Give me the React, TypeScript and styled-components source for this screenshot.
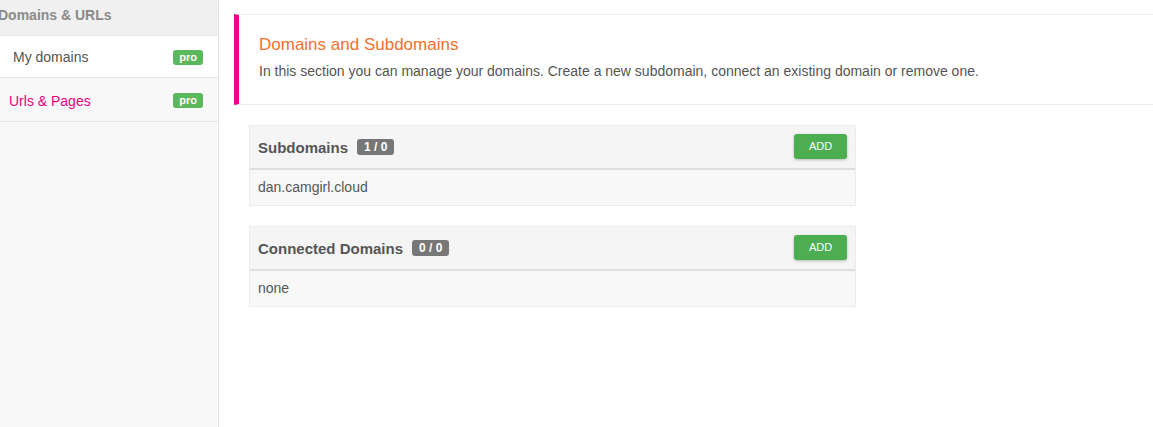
import React from "react";
import styled, { createGlobalStyle } from "styled-components";

const Global = createGlobalStyle`
  html, body { margin: 0; padding: 0; background: #fff; }
  body { font-family: "Liberation Sans", Arial, sans-serif; color: #555; }
  * { box-sizing: border-box; }
`;

const Layout = styled.div`
  display: flex;
  width: 1153px;
  height: 427px;
  overflow: hidden;
`;

const Sidebar = styled.aside`
  width: 219px;
  flex-shrink: 0;
  background: #f8f8f8;
  border-right: 1px solid #e3e3e3;
`;

const SideHeader = styled.div`
  height: 36px;
  background: #f0f0f0;
  border-bottom: 1px solid #e6e6e6;
  display: flex;
  align-items: center;
  font-weight: bold;
  font-size: 14px;
  color: #8a8a8a;
  text-indent: -2px;
  padding-bottom: 6px;
`;

const SideItem = styled.div<{ $active?: boolean; $indent: number }>`
  height: ${(p) => (p.$active ? 42 : 44)}px;
  display: flex;
  align-items: center;
  justify-content: space-between;
  padding-left: ${(p) => p.$indent}px;
  padding-right: 15px;
  padding-top: ${(p) => (p.$active ? 1 : 2)}px;
  background: ${(p) => (p.$active ? "#fff" : "#f8f8f8")};
  border-bottom: 1px solid #e6e6e6;
  font-size: 14px;
  color: ${(p) => (p.$active ? "#555" : "#e6007e")};
`;

const Pro = styled.span`
  background: #5cb85c;
  color: #fff;
  font-weight: bold;
  font-size: 11px;
  line-height: 15px;
  padding: 0 6px;
  border-radius: 3px;
`;

const Main = styled.main`
  flex: 1;
  padding: 14px 0 0 15px;
`;

const Intro = styled.section`
  border-top: 1px solid #ebebeb;
  border-bottom: 1px solid #ebebeb;
  border-left: 5px solid #ec008c;
  padding: 19px 20px 0 20px;
  height: 91px;
`;

const Title = styled.h2`
  margin: 0;
  font-size: 17px;
  font-weight: normal;
  color: #f4702a;
  line-height: 22px;
`;

const Desc = styled.p`
  margin: 6px 0 0;
  font-size: 14px;
  line-height: 18px;
  color: #555;
`;

const Panels = styled.div`
  display: flex;
  flex-direction: column;
  gap: 20px;
  padding: 20px 0 0 15px;
  width: 637px;
`;

const Panel = styled.div`
  border: 1px solid #ececec;
  width: 607px;
`;

const PanelHead = styled.div`
  height: 44px;
  background: #f5f5f5;
  border-bottom: 2px solid #dedede;
  display: flex;
  align-items: center;
  padding: 0 8px 0 8px;
`;

const PanelTitle = styled.h3`
  margin: 0;
  font-size: 15px;
  font-weight: bold;
  color: #555;
`;

const Count = styled.span`
  margin-left: 9px;
  background: #777;
  color: #fff;
  font-size: 12px;
  font-weight: bold;
  line-height: 16px;
  padding: 0 7px;
  border-radius: 3px;
`;

const AddButton = styled.button`
  margin-left: auto;
  margin-bottom: 2px;
  width: 53px;
  height: 25px;
  border: none;
  border-radius: 3px;
  background: #4cae50;
  color: #fff;
  font-family: "Liberation Sans", Arial, sans-serif;
  font-size: 11px;
  box-shadow: 0 1px 3px rgba(0, 0, 0, 0.25);
  padding: 0;
`;

const PanelBody = styled.div`
  height: 35px;
  background: #f8f8f8;
  display: flex;
  align-items: center;
  padding-left: 8px;
  padding-bottom: 2px;
  font-size: 14px;
  color: #555;
`;

const panels = [
  { title: "Subdomains", count: "1 / 0", body: "dan.camgirl.cloud" },
  { title: "Connected Domains", count: "0 / 0", body: "none" },
];

export default function App() {
  return (
    <>
      <Global />
      <Layout>
        <Sidebar>
          <SideHeader>Domains &amp; URLs</SideHeader>
          <SideItem $active $indent={13}>
            My domains <Pro>pro</Pro>
          </SideItem>
          <SideItem $indent={9}>
            Urls &amp; Pages <Pro>pro</Pro>
          </SideItem>
        </Sidebar>
        <Main>
          <Intro>
            <Title>Domains and Subdomains</Title>
            <Desc>
              In this section you can manage your domains. Create a new subdomain, connect an existing domain or remove one.
            </Desc>
          </Intro>
          <Panels>
            {panels.map((p) => (
              <Panel key={p.title}>
                <PanelHead>
                  <PanelTitle>{p.title}</PanelTitle>
                  <Count>{p.count}</Count>
                  <AddButton>ADD</AddButton>
                </PanelHead>
                <PanelBody>{p.body}</PanelBody>
              </Panel>
            ))}
          </Panels>
        </Main>
      </Layout>
    </>
  );
}
